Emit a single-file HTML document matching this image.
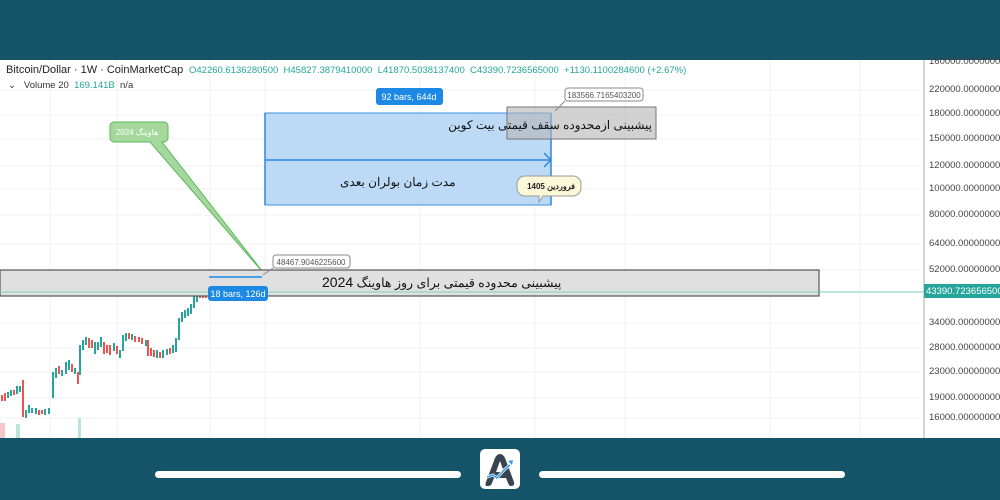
<!DOCTYPE html>
<html><head><meta charset="utf-8"><style>
body{margin:0;width:1000px;height:500px;overflow:hidden;background:#fff;font-family:"Liberation Sans","Noto Sans CJK SC",sans-serif;position:relative}
.bar{position:absolute;left:0;width:1000px;background:#155369}
.t{position:absolute;white-space:nowrap}
</style></head><body>
<svg width="1000" height="500" style="position:absolute;left:0;top:0" font-family="Liberation Sans, sans-serif">
<g stroke="#eef1f5" stroke-width="1">
<line x1="0" y1="90" x2="922" y2="90"/><line x1="0" y1="115" x2="922" y2="115"/><line x1="0" y1="139" x2="922" y2="139"/><line x1="0" y1="166" x2="922" y2="166"/><line x1="0" y1="189" x2="922" y2="189"/><line x1="0" y1="215" x2="922" y2="215"/><line x1="0" y1="244" x2="922" y2="244"/><line x1="0" y1="270" x2="922" y2="270"/><line x1="0" y1="323" x2="922" y2="323"/><line x1="0" y1="348" x2="922" y2="348"/><line x1="0" y1="372" x2="922" y2="372"/><line x1="0" y1="398" x2="922" y2="398"/><line x1="0" y1="418" x2="922" y2="418"/>
<line x1="50" y1="60" x2="50" y2="438"/><line x1="117" y1="60" x2="117" y2="438"/><line x1="210" y1="60" x2="210" y2="438"/><line x1="265" y1="60" x2="265" y2="438"/><line x1="420" y1="60" x2="420" y2="438"/><line x1="535" y1="60" x2="535" y2="438"/><line x1="625" y1="60" x2="625" y2="438"/><line x1="770" y1="60" x2="770" y2="438"/><line x1="860" y1="60" x2="860" y2="438"/>
</g>
<line x1="924" y1="60" x2="924" y2="438" stroke="#aaa"/>
<line x1="0" y1="292" x2="924" y2="292" stroke="#7fcfc4"/>
<rect x="0" y="423" width="5" height="15" fill="#f5c6c6"/><rect x="16" y="424" width="4" height="14" fill="#b9e4dc"/><rect x="78" y="418" width="3" height="20" fill="#b9e4dc"/>
<g fill="#26a69a">
<rect x="1" y="395" width="2" height="6" fill="#ef5350"/><rect x="4" y="393" width="2" height="8" fill="#ef5350"/><rect x="7" y="392" width="2" height="6"/><rect x="10" y="390" width="2" height="6"/><rect x="13" y="390" width="2" height="5" fill="#ef5350"/><rect x="16" y="386" width="2" height="8"/><rect x="19" y="386" width="2" height="6"/>
<rect x="22" y="380" width="2" height="37" fill="#ef5350"/><rect x="25" y="410" width="2" height="8"/><rect x="28" y="405" width="2" height="8"/><rect x="31" y="408" width="2" height="5"/><rect x="35" y="408" width="2" height="6"/><rect x="38" y="410" width="2" height="5" fill="#ef5350"/><rect x="41" y="410" width="2" height="4" fill="#ef5350"/><rect x="44" y="409" width="2" height="6"/><rect x="48" y="408" width="2" height="6"/>
<rect x="52" y="372" width="2" height="26"/><rect x="55" y="368" width="2" height="10"/><rect x="58" y="366" width="2" height="8" fill="#ef5350"/><rect x="61" y="370" width="2" height="6"/><rect x="65" y="362" width="2" height="12"/><rect x="68" y="360" width="2" height="10"/><rect x="71" y="364" width="2" height="8" fill="#ef5350"/><rect x="74" y="368" width="2" height="6"/><rect x="77" y="372" width="2" height="12" fill="#ef5350"/>
<rect x="79" y="345" width="2" height="30"/><rect x="82" y="340" width="2" height="10"/><rect x="85" y="337" width="2" height="8"/><rect x="88" y="338" width="2" height="10" fill="#ef5350"/><rect x="91" y="340" width="2" height="8" fill="#ef5350"/><rect x="94" y="342" width="2" height="12"/><rect x="97" y="342" width="2" height="8"/><rect x="100" y="337" width="2" height="10"/><rect x="103" y="342" width="2" height="12" fill="#ef5350"/><rect x="106" y="345" width="2" height="8" fill="#ef5350"/><rect x="109" y="345" width="2" height="10" fill="#ef5350"/><rect x="113" y="343" width="2" height="8"/><rect x="116" y="346" width="2" height="8" fill="#ef5350"/><rect x="119" y="350" width="2" height="8"/>
<rect x="122" y="335" width="2" height="16"/><rect x="125" y="333" width="2" height="8"/><rect x="128" y="333" width="2" height="6" fill="#ef5350"/><rect x="131" y="334" width="2" height="6"/><rect x="134" y="336" width="2" height="6" fill="#ef5350"/><rect x="138" y="337" width="2" height="5" fill="#ef5350"/><rect x="141" y="338" width="2" height="6" fill="#ef5350"/><rect x="145" y="340" width="2" height="6"/><rect x="147" y="340" width="2" height="16" fill="#ef5350"/><rect x="150" y="348" width="2" height="8" fill="#ef5350"/><rect x="153" y="350" width="2" height="7" fill="#ef5350"/><rect x="156" y="350" width="2" height="8"/><rect x="159" y="352" width="2" height="6" fill="#ef5350"/><rect x="162" y="350" width="2" height="8"/><rect x="166" y="349" width="2" height="6"/><rect x="169" y="348" width="2" height="6" fill="#ef5350"/><rect x="172" y="345" width="2" height="8"/>
<rect x="175" y="338" width="2" height="14"/><rect x="178" y="318" width="2" height="22"/><rect x="181" y="312" width="2" height="10"/><rect x="184" y="310" width="2" height="8"/><rect x="187" y="308" width="2" height="8"/><rect x="190" y="304" width="2" height="10"/><rect x="193" y="296" width="2" height="12"/><rect x="196" y="290" width="2" height="12"/><rect x="199" y="290" width="2" height="8" fill="#ef5350"/><rect x="202" y="290" width="2" height="8" fill="#ef5350"/><rect x="205" y="292" width="2" height="6" fill="#ef5350"/>
</g>
<rect x="265" y="113" width="286" height="92" fill="#bcdaf6" stroke="#3d8fe0"/>
<line x1="265" y1="113" x2="265" y2="205" stroke="#2d86e0" stroke-width="1.5"/><line x1="551" y1="113" x2="551" y2="205" stroke="#2d86e0" stroke-width="1.5"/>
<line x1="265" y1="160" x2="551" y2="160" stroke="#2d86e0" stroke-width="1.5"/><path d="M544 153 L551 160 L544 167" fill="none" stroke="#2d86e0" stroke-width="1.5"/>
<rect x="507" y="107" width="149" height="32" fill="rgba(180,180,180,0.6)" stroke="#777"/>
<rect x="565" y="88" width="78" height="13" rx="3" fill="#fff" stroke="#888"/><line x1="565" y1="101" x2="555" y2="111" stroke="#888"/>
<text x="604" y="98" font-size="8" fill="#555" text-anchor="middle">183566.7165403200</text>
<rect x="376" y="88" width="67" height="17" rx="3" fill="#1e88e5"/><text x="409" y="100" font-size="9" fill="#fff" text-anchor="middle">92 bars, 644d</text>
<path d="M525 176 h48 a8 8 0 0 1 8 8 v4 a8 8 0 0 1 -8 8 h-30 l-4 6 v-6 h-14 a8 8 0 0 1 -8 -8 v-4 a8 8 0 0 1 8 -8z" fill="#fbf8d9" stroke="#999"/>
<text x="551" y="189" font-size="8" font-weight="bold" fill="#222" text-anchor="middle">فروردین 1405</text>
<path d="M114 122 h50 a4 4 0 0 1 4 4 v12 a4 4 0 0 1 -4 4 h-2 L266 276 L150 142 h-36 a4 4 0 0 1 -4 -4 v-12 a4 4 0 0 1 4 -4z" fill="#a4d89c" stroke="#5bb85b"/>
<text x="137" y="135" font-size="8" fill="#fff" text-anchor="middle">هاوینگ 2024</text>
<rect x="0" y="270" width="819" height="26" fill="#e0e0e0" stroke="#555" stroke-width="1.2"/>
<line x1="0" y1="292" x2="819" y2="292" stroke="#7fcfc4"/>
<line x1="209" y1="277" x2="262" y2="277" stroke="#1e88e5" stroke-width="1.5"/>
<rect x="273" y="255" width="77" height="13" rx="3" fill="#fff" stroke="#888"/><line x1="273" y1="268" x2="263" y2="275" stroke="#888"/>
<text x="311" y="265" font-size="8" fill="#555" text-anchor="middle">48467.9046225600</text>
<rect x="208" y="286" width="60" height="15" rx="3" fill="#1e88e5"/><text x="238" y="297" font-size="9" fill="#fff" text-anchor="middle">18 bars, 126d</text>
<rect x="924" y="284" width="76" height="14" fill="#26a69a"/>
</svg>
<div class="bar" style="top:0;height:60px"></div>
<div class="bar" style="top:438px;height:62px"></div>
<div style="position:absolute;left:155px;top:471px;width:306px;height:7px;border-radius:4px;background:#fff"></div>
<div style="position:absolute;left:539px;top:471px;width:306px;height:7px;border-radius:4px;background:#fff"></div>
<div style="position:absolute;left:480px;top:449px;width:40px;height:40px;border-radius:5px;background:#fff"></div>
<svg width="40" height="40" style="position:absolute;left:480px;top:449px"><path d="M6 37 Q5 36 6 33 L15 9 Q17 5 20 5 Q23 5 25 9 L34 33 Q35 37 31 37 Q29 37 28 34 L26 29 H14 L12 34 Q11 37 8 37z M16 23 h8 l-4 -11z" fill="#3a4350" fill-rule="evenodd"/><path d="M7 28 l6 -2 l4 3 l7 -8 l6 -5" fill="none" stroke="#fff" stroke-width="3"/><path d="M7 28 l6 -2 l4 3 l7 -8 l6 -5" fill="none" stroke="#3a9ee8" stroke-width="1.6"/><path d="M28 12 l5 -1 l-1 5z" fill="#3a9ee8"/></svg>
<div class="t" style="left:6px;top:64px;font-size:11px;color:#222">Bitcoin/Dollar · 1W · CoinMarketCap <span style="color:#26a69a;font-size:9.5px">&nbsp;O42260.6136280500 &nbsp;H45827.3879410000 &nbsp;L41870.5038137400 &nbsp;C43390.7236565000 &nbsp;+1130.1100284600 (+2.67%)</span></div>
<div class="t" style="left:8px;top:80px;font-size:9.5px;color:#333">⌄&nbsp;&nbsp; Volume 20 &nbsp;<span style="color:#26a69a">169.141B</span>&nbsp; n/a</div>
<div class="t" style="left:452px;top:118px;font-size:12px;color:#111;direction:rtl;width:200px;text-align:right">پیشبینی ازمحدوده سقف قیمتی بیت کوین</div>
<div class="t" style="left:340px;top:175px;font-size:12px;color:#111">مدت زمان بولران بعدی</div>
<div class="t" style="left:322px;top:274px;font-size:12.5px;color:#111;direction:rtl">پیشبینی محدوده قیمتی برای روز  هاوینگ <span style="font-size:14px">2024</span></div>
<div style="position:absolute;left:929px;top:55px;font-size:9.5px;color:#444;line-height:1">
<div class="t" style="top:2px">160000.0000000000</div>
<div class="t" style="top:30px">220000.0000000000</div><div class="t" style="top:54px">180000.0000000000</div><div class="t" style="top:79px">150000.0000000000</div><div class="t" style="top:106px">120000.0000000000</div><div class="t" style="top:129px">100000.0000000000</div><div class="t" style="top:155px">80000.0000000000</div><div class="t" style="top:184px">64000.0000000000</div><div class="t" style="top:210px">52000.0000000000</div>
<div class="t" style="top:232px;color:#fff;left:-3px">43390.7236565000</div>
<div class="t" style="top:263px">34000.0000000000</div><div class="t" style="top:288px">28000.0000000000</div><div class="t" style="top:312px">23000.0000000000</div><div class="t" style="top:338px">19000.0000000000</div><div class="t" style="top:358px">16000.0000000000</div>
</div>
</body></html>
